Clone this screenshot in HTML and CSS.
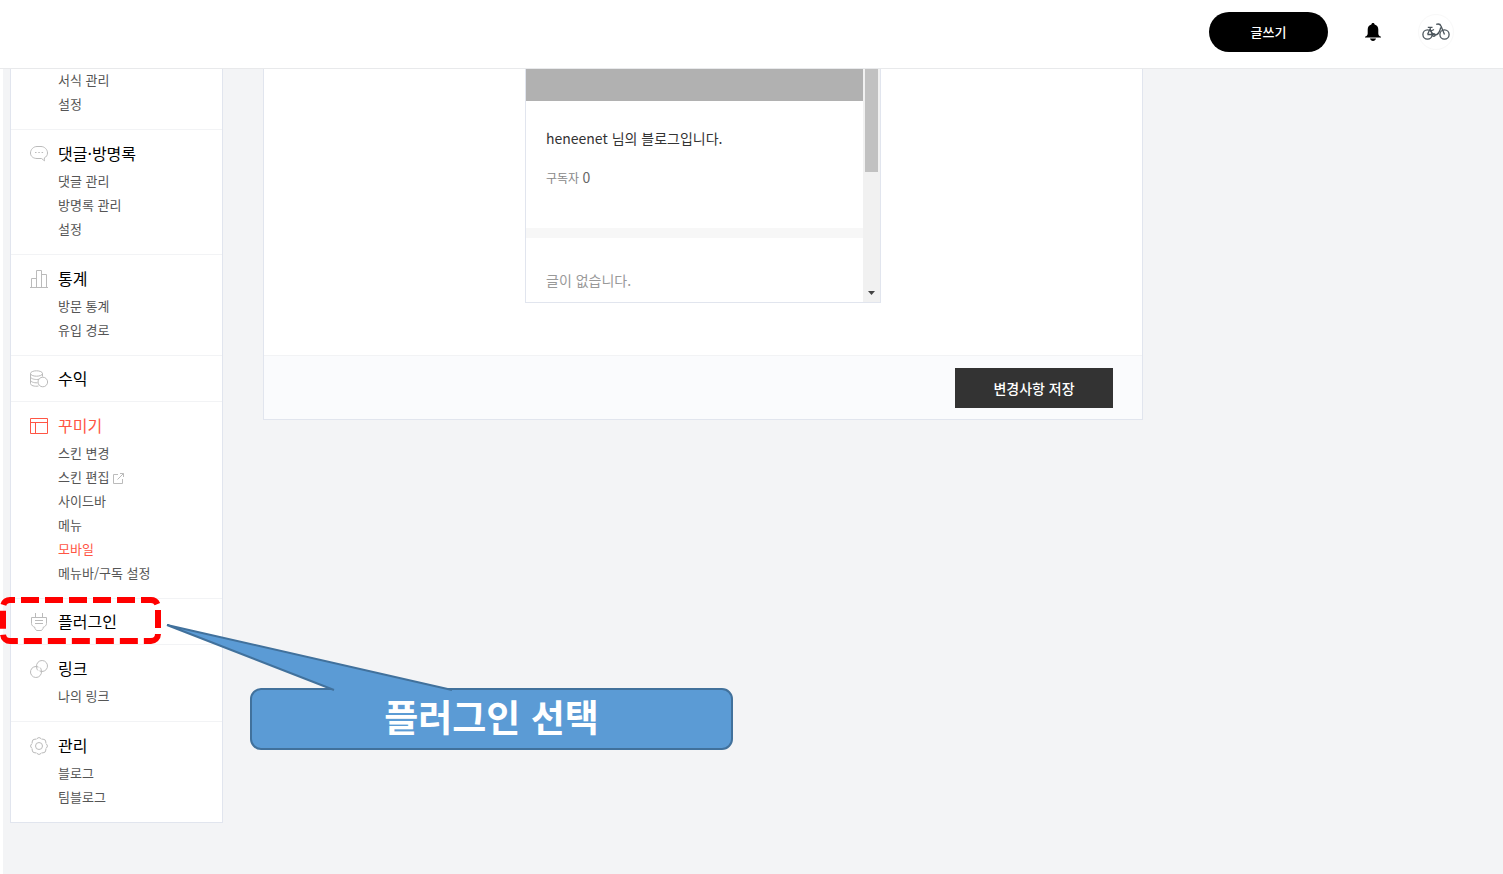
FILE: index.html
```
<!DOCTYPE html>
<html lang="ko">
<head>
  <meta charset="UTF-8" />
  <meta name="viewport" content="width=device-width, initial-scale=1.0"/>
  <title>블로그 관리 - 모바일</title>
  <link rel="stylesheet" href="styles.css">
</head>
<body>

<header class="top-bar">
  <button class="write-button">글쓰기</button>
  <button class="icon-button bell-button" aria-label="알림">
    <svg width="16" height="18" viewBox="0 0 16 18">
      <path d="M8 0C7 0 6.400 .6 6.400 1.500C4 2.100 2.700 4 2.700 6.500V10.500C2.700 12 1.800 13 0 13.800V14.500H16V13.800C14.200 13 13.300 12 13.300 10.500V6.500C13.300 4 12 2.100 9.600 1.500C9.600 .6 9 0 8 0Z"/>
      <path d="M5 15.500H11C10.600 17 9.500 18 8 18S5.400 17 5 15.500Z"/>
    </svg>
  </button>
  <button class="icon-button profile-button" aria-label="프로필">
    <svg width="28" height="18" viewBox="0 0 28 18" fill="none" stroke="#4b555c" stroke-width="1.300">
      <circle cx="5.500" cy="11.500" r="4.600"/>
      <circle cx="22.500" cy="11.500" r="4.600"/>
      <path d="M5.500 11.500L8.500 5M8 5.500C9 9 10 12 13 12C16 12 18 8 18.700 4.500M5.500 11.500H11M22.500 11.500L19 3C18.200 .8 16.500 .6 14.200 1.300M5.800 4.300H10.500M9 8L12 6.500"/>
      <circle cx="11.800" cy="12" r="1.300"/>
    </svg>
  </button>
</header>

<div class="container">
  <nav class="sidebar">
    <!-- 콘텐츠 -->
    <section class="menu-group first">
      <ul>
        <li><a href="#">서식 관리</a></li>
        <li><a href="#">설정</a></li>
      </ul>
    </section>

    <!-- 댓글·방명록 -->
    <section class="menu-group">
      <h2>
        <svg class="menu-icon" viewBox="0 0 18 18">
          <path d="M14.500 14.500L14.300 12.900C16.400 11.900 17.500 10.100 17.500 8C17.500 4.500 14.500 1.500 11 1.500H7C3.500 1.500 .5 4.500 .5 8S3.500 13.500 7 13.500H11.500L14.500 15.800Z"/>
          <path d="M5 7.500H6.500M8.300 7.500H9.800M11.600 7.500H13.100"/>
        </svg>
        <a href="#">댓글·방명록</a>
      </h2>
      <ul>
        <li><a href="#">댓글 관리</a></li>
        <li><a href="#">방명록 관리</a></li>
        <li><a href="#">설정</a></li>
      </ul>
    </section>

    <!-- 통계 -->
    <section class="menu-group">
      <h2>
        <svg class="menu-icon" viewBox="0 0 18 18">
          <path d="M0 17.500H18M1.500 17.500V8.500H6.500M6.500 17.500V.5H11.500V17.500M11.500 4.500H16.500V17.500"/>
        </svg>
        <a href="#">통계</a>
      </h2>
      <ul>
        <li><a href="#">방문 통계</a></li>
        <li><a href="#">유입 경로</a></li>
      </ul>
    </section>

    <!-- 수익 -->
    <section class="menu-group single">
      <h2>
        <svg class="menu-icon" viewBox="0 0 18 18">
          <ellipse cx="6.500" cy="3.500" rx="6" ry="2.700"/>
          <path d="M.5 3.500V13.500C.5 15.500 4.500 16.800 8.500 16M12.500 3.500V6.500M.5 6.800C.5 8.300 3.500 9.500 6.500 9.500C7.500 9.500 8.300 9.400 9 9.200M.5 10C.5 11.700 3.500 13 7.500 12.800"/>
          <circle cx="12.800" cy="12" r="4.800"/>
        </svg>
        <a href="#">수익</a>
      </h2>
    </section>

    <!-- 꾸미기 -->
    <section class="menu-group">
      <h2 class="active">
        <svg class="menu-icon" viewBox="0 0 18 18">
          <path d="M.5 1.500H17.500V16.500H.5ZM.5 5.500H17.500M5.500 5.500V16.500"/>
        </svg>
        <a href="#">꾸미기</a>
      </h2>
      <ul>
        <li><a href="#">스킨 변경</a></li>
        <li>
          <a href="#">스킨 편집
            <svg class="link-icon" viewBox="0 0 11 11">
              <path d="M5 1.500H.5V10.500H9.500V6M7 .5H10.500V4M10.500 .5L4.500 6.500"/>
            </svg>
          </a>
        </li>
        <li><a href="#">사이드바</a></li>
        <li><a href="#">메뉴</a></li>
        <li class="active"><a href="#">모바일</a></li>
        <li><a href="#">메뉴바/구독 설정</a></li>
      </ul>
    </section>

    <!-- 플러그인 -->
    <section class="menu-group single marked">
      <h2>
        <svg class="menu-icon" viewBox="0 0 18 18">
          <path d="M1.500 4.500H16.500V10.500C16.500 12.500 15 13.500 13 14.500V15.500L11.500 17.500H6.500L5 15.500V14.500C3 13.500 1.500 12.500 1.500 10.500ZM5.500 0V4M12.500 0V4M5 7.500H13M5 10.500H13"/>
        </svg>
        <a href="#">플러그인</a>
      </h2>
      <svg class="mark" width="161" height="47" viewBox="0 0 161 47">
        <path d="M10 3H151A7 7 0 0 1 158 10V37A7 7 0 0 1 151 44H10A7 7 0 0 1 3 37V10A7 7 0 0 1 10 3"/>
      </svg>
    </section>

    <!-- 링크 -->
    <section class="menu-group">
      <h2>
        <svg class="menu-icon" viewBox="0 0 18 18">
          <path d="M8.500 7.100A5.500 5.500 0 1 0 11.400 11C11.400 9.800 11 8.500 10 7.500"/>
          <path d="M9.500 10.900A5.500 5.500 0 1 0 6.600 7C6.600 8.300 7 9.500 8 10.500"/>
        </svg>
        <a href="#">링크</a>
      </h2>
      <ul>
        <li><a href="#">나의 링크</a></li>
      </ul>
    </section>

    <!-- 관리 -->
    <section class="menu-group">
      <h2>
        <svg class="menu-icon" viewBox="0 0 18 18">
          <path d="M7 1.500Q9 -.5 11 1.500Q11.500 2.700 12.900 2.100Q15.800 2.200 15.900 5.100Q15.300 6.500 16.500 7Q18.500 9 16.500 11Q15.300 11.500 15.900 12.900Q15.800 15.800 12.900 15.900Q11.500 15.300 11 16.500Q9 18.500 7 16.500Q6.500 15.300 5.100 15.900Q2.200 15.800 2.100 12.900Q2.700 11.500 1.500 11Q-.5 9 1.500 7Q2.700 6.500 2.100 5.100Q2.200 2.200 5.100 2.100Q6.500 2.700 7 1.500Z"/>
          <circle cx="9" cy="9" r="3.500"/>
        </svg>
        <a href="#">관리</a>
      </h2>
      <ul>
        <li><a href="#">블로그</a></li>
        <li><a href="#">팀블로그</a></li>
      </ul>
    </section>
  </nav>

  <main class="content">
    <div class="preview-area">
      <!-- 모바일 미리보기 -->
      <div class="preview">
        <div class="preview-page">
          <div class="cover"></div>
          <div class="blog-info">
            <p class="blog-desc">heneenet 님의 블로그입니다.</p>
            <p class="subscriber">구독자 <span>0</span></p>
          </div>
          <p class="empty">글이 없습니다.</p>
        </div>
        <div class="scrollbar">
          <div class="thumb"></div>
          <svg width="7" height="4" viewBox="0 0 7 4"><path d="M0 0H7L3.500 4Z"/></svg>
        </div>
      </div>
    </div>
    <div class="save-area">
      <button class="save-button">변경사항 저장</button>
    </div>
  </main>

  <!-- 안내 말풍선 -->
  <div class="callout">
    <svg class="callout-tail" width="290" height="68" viewBox="0 0 290 68">
      <path class="fill" d="M2 1L169 66V68H287V66Z"/>
      <path class="line" d="M169 66L2 1L287 66"/>
    </svg>
    플러그인 선택
  </div>
</div>

</body>
</html>
```
FILE: styles.css
```
* {
  box-sizing: border-box;
}

body {
  margin: 0;
  background-color: #fff;
  color: #000;
  font-family: 'Noto Sans CJK KR', sans-serif;
  font-size: 13px;
  line-height: 24px;
}

h2, p, ul {
  margin: 0;
  padding: 0;
}

ul {
  list-style: none;
}

a {
  color: inherit;
  text-decoration: none;
}

button {
  border: none;
  font-family: inherit;
  cursor: pointer;
}

/* 상단 */
.top-bar {
  position: relative;
  z-index: 1;
  display: flex;
  align-items: center;
  justify-content: flex-end;
  height: 68px;
  padding: 0 49px 4px 0;
  background-color: #fff;
  box-shadow: 0 1px 0 #e8e9eb;
}

.write-button {
  width: 119px;
  height: 40px;
  margin-right: 27px;
  padding: 0 0 2px;
  border-radius: 20px;
  background-color: #000;
  color: #fff;
  font-size: 13px;
  font-weight: 500;
}

.icon-button {
  display: flex;
  align-items: center;
  justify-content: center;
  width: 36px;
  height: 36px;
  padding: 0;
  background: none;
}

.profile-button {
  margin-left: 27px;
  border: 1px solid #f8f8f8;
  border-radius: 50%;
}

.container {
  position: relative;
  display: flex;
  align-items: flex-start;
  gap: 40px;
  min-height: calc(100vh - 68px);
  margin-left: 3px;
  padding: 0 20px 50px 7px;
  background-color: #f3f4f6;
}

/* 사이드 메뉴 */
.sidebar {
  flex: none;
  width: 213px;
  border: 1px solid #e1e5ee;
  border-top: none;
  background-color: #fff;
}

.menu-group {
  padding: 11px 19px 13px;
  border-bottom: 1px solid #f2f3f5;
}

.menu-group:last-child {
  border-bottom: none;
}

.menu-group.first {
  padding-top: 0;
}

.menu-group.single {
  padding: 10px 19px 11px;
}

.menu-group h2 {
  display: flex;
  align-items: center;
  gap: 10px;
  font-size: 16px;
  font-weight: 400;
}

.menu-group ul {
  margin: 4px 0 0 28px;
  color: #555;
}

.menu-group.first ul {
  margin-top: 0;
}

.menu-group .active {
  color: #ff5544;
}

.menu-icon {
  flex: none;
  width: 18px;
  height: 18px;
  margin-top: 2px;
  fill: none;
  stroke: #bbb;
}

.active .menu-icon {
  stroke: #ff5544;
}

.link-icon {
  width: 11px;
  height: 11px;
  vertical-align: -2px;
  fill: none;
  stroke: #bbb;
}

.marked {
  position: relative;
}

.mark {
  position: absolute;
  top: -2px;
  left: -11px;
  fill: none;
  stroke: #f00;
  stroke-width: 6;
  stroke-dasharray: 18 6;
  stroke-dashoffset: 13;
  pointer-events: none;
}

/* 본문 */
.content {
  flex: 0 1 880px;
  border: 1px solid #e1e5ee;
  border-top: none;
  background-color: #fff;
}

.preview-area {
  padding-bottom: 52px;
}

.preview {
  display: flex;
  width: 356px;
  margin: 0 auto;
  border: 1px solid #e1e5ee;
  border-top: none;
}

.preview-page {
  flex: 1;
}

.cover {
  height: 33px;
  background-color: #b1b1b1;
}

.blog-info {
  padding: 25px 20px 38px;
  border-bottom: 10px solid #f7f7f7;
}

.blog-desc {
  color: #333;
  font-size: 14px;
}

.subscriber {
  margin-top: 15px;
  color: #888;
  font-size: 12px;
}

.subscriber span {
  color: #666;
  font-size: 14px;
}

.empty {
  padding: 30px 20px 10px;
  color: #999;
  font-size: 14px;
}

.scrollbar {
  display: flex;
  flex-direction: column;
  align-items: center;
  justify-content: space-between;
  width: 17px;
  padding-bottom: 7px;
  background-color: #f1f1f1;
}

.scrollbar .thumb {
  width: 13px;
  height: 104px;
  background-color: #c1c1c1;
}

.scrollbar svg {
  fill: #444;
}

.save-area {
  display: flex;
  justify-content: flex-end;
  padding: 12px 29px 11px;
  border-top: 1px solid #f2f3f5;
  background-color: #fafbfd;
}

.save-button {
  width: 158px;
  height: 40px;
  background-color: #333;
  color: #fff;
  font-size: 14px;
  font-weight: 500;
}

/* 말풍선 */
.callout {
  position: absolute;
  top: 620px;
  left: 247px;
  width: 483px;
  height: 62px;
  border: 2px solid #41719c;
  border-radius: 11px;
  background-color: #5b9bd5;
  color: #fff;
  font-size: 37px;
  font-weight: 700;
  line-height: 52px;
  text-align: center;
}

.callout-tail {
  position: absolute;
  top: -66px;
  left: -87px;
}

.callout-tail .fill {
  fill: #5b9bd5;
}

.callout-tail .line {
  fill: none;
  stroke: #41719c;
  stroke-width: 2;
}
```
